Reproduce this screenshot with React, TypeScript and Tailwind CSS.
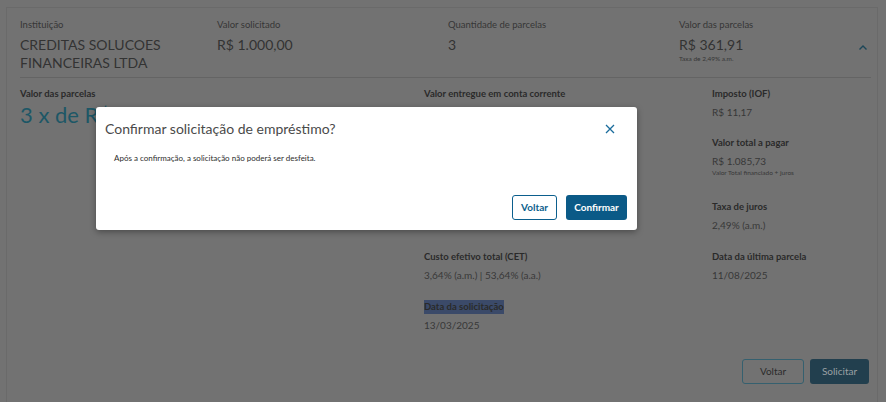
import React from "react";

const font = { fontFamily: "Lato, 'Open Sans', sans-serif" };

function Field({ label, value, sub, className = "" }: { label: string; value: string; sub?: string; className?: string }) {
  return (
    <div className={"flex flex-col " + className}>
      <div className="text-[9.5px] font-bold leading-[14px] text-[#2a2a2a]">{label}</div>
      <div className="mt-[4px] text-[10px] leading-[14px] text-[#383838]">{value}</div>
      {sub && <div className="text-[6.5px] leading-[10px] text-[#383838]">{sub}</div>}
    </div>
  );
}

export default function App() {
  return (
    <div className="relative h-[402px] w-[886px] overflow-hidden bg-[#727272]" style={font}>
      <div className="ml-[6px] mt-[7px] flex h-[400px] w-[872px] flex-col border border-[#6a6a6a] pl-[13px] pr-[6px]">
        <div className="flex pt-[10px]">
          <div className="w-[197px]">
            <div className="text-[9.5px] leading-[14px] text-[#363636]">Instituição</div>
            <div className="mt-[4px] text-[14px] leading-[18px] text-[#333333]">CREDITAS SOLUCOES<br />FINANCEIRAS LTDA</div>
          </div>
          <div className="w-[231px]">
            <div className="text-[9.5px] leading-[14px] text-[#363636]">Valor solicitado</div>
            <div className="mt-[4px] text-[14px] leading-[18px] text-[#333333]">R$ 1.000,00</div>
          </div>
          <div className="w-[231px]">
            <div className="text-[9.5px] leading-[14px] text-[#363636]">Quantidade de parcelas</div>
            <div className="mt-[4px] text-[14px] leading-[18px] text-[#333333]">3</div>
          </div>
          <div className="flex flex-1 items-start justify-between">
            <div>
              <div className="text-[9.5px] leading-[14px] text-[#363636]">Valor das parcelas</div>
              <div className="mt-[4px] text-[14px] leading-[18px] text-[#333333]">R$ 361,91</div>
              <div className="text-[6.5px] leading-[9px] text-[#363636]">Taxa de 2,49% a.m.</div>
            </div>
            <svg className="mr-[3px] mt-[26px]" width="10" height="7" viewBox="0 0 10 7">
              <path d="M1.5 5.5 L5 2 L8.5 5.5" fill="none" stroke="#1c4658" strokeWidth="1.4" />
            </svg>
          </div>
        </div>
        <div className="mt-[5px] h-px w-[851px] bg-[#646464]" />
        <div className="flex pt-[9px]">
          <div className="w-[404px]">
            <div className="text-[9.5px] font-bold leading-[14px] text-[#2a2a2a]">Valor das parcelas</div>
            <div className="mt-[1px] text-[22px] leading-[26px] text-[#1d5766]">3 x de R$ 361,91</div>
          </div>
          <div className="flex w-[288px] flex-col gap-[16px]">
            <Field label="Valor entregue em conta corrente" value="R$ 988,83" />
            <Field label="Valor total financiado" value="R$ 1.011,17" sub="Valor liberado + IOF" className="mt-[1px]" />
            <Field label="Custo efetivo total (CET)" value="3,64% (a.m.) | 53,64% (a.a.)" className="mt-[56px]" />
            <div className="mt-[2px] flex flex-col">
              <div className="w-fit bg-[#3b4a69] text-[9.5px] font-bold leading-[14px] text-[#2a2a2a]">Data da solicitação</div>
              <div className="mt-[4px] text-[10px] leading-[14px] text-[#383838]">13/03/2025</div>
            </div>
          </div>
          <div className="flex flex-col gap-[16px]">
            <Field label="Imposto (IOF)" value="R$ 11,17" />
            <Field label="Valor total a pagar" value="R$ 1.085,73" sub="Valor Total financiado + juros" className="mt-[1px]" />
            <Field label="Taxa de juros" value="2,49% (a.m.)" className="mt-[6px]" />
            <Field label="Data da última parcela" value="11/08/2025" className="mt-[2px]" />
          </div>
        </div>
        <div className="mt-auto mb-[22px] flex justify-end gap-[6px] pr-[2px]">
          <button className="h-[25px] w-[62px] rounded-[3px] border border-[#35606f] text-[10px] text-[#2b2b2b]">Voltar</button>
          <button className="h-[25px] w-[59px] rounded-[3px] bg-[#223f4e] text-[10px] text-[#9aa0a4]">Solicitar</button>
        </div>
      </div>

      <div className="absolute left-[96px] top-[107px] h-[123px] w-[541px] rounded-[3px] bg-white shadow-[0_2px_6px_rgba(0,0,0,0.35)]">
        <div className="flex items-center justify-between pl-[9px] pr-[22px] pt-[12px]">
          <div className="text-[14px] leading-[20px] text-[#4a4a4a]">Confirmar solicitação de empréstimo?</div>
          <svg width="10" height="10" viewBox="0 0 10 10">
            <path d="M1 1 L9 9 M9 1 L1 9" stroke="#1a6c9c" strokeWidth="1.3" />
          </svg>
        </div>
        <div className="mt-[13px] pl-[18px] text-[8px] leading-[12px] text-[#2d2d2d]">Após a confirmação, a solicitação não poderá ser desfeita.</div>
        <div className="absolute bottom-[10px] right-[10px] flex gap-[9px]">
          <button className="h-[25px] w-[45px] rounded-[3px] border border-[#0c5f8d] text-[10px] font-bold text-[#0c5f8d]">Voltar</button>
          <button className="h-[25px] w-[61px] rounded-[3px] bg-[#0b5a87] text-[10px] font-bold text-white">Confirmar</button>
        </div>
      </div>
    </div>
  );
}
